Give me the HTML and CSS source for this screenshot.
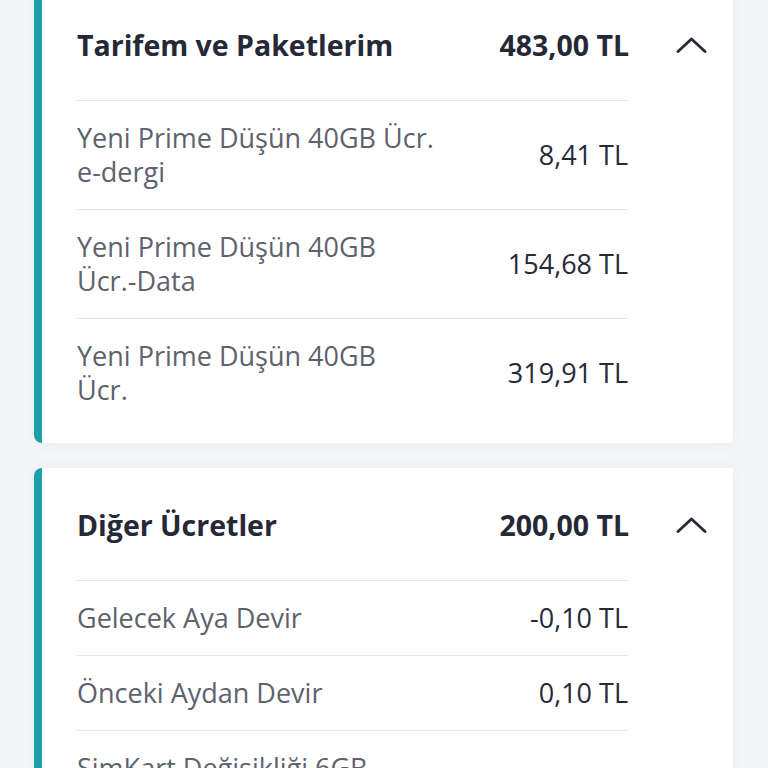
FILE: index.html
```html
<!DOCTYPE html>
<html lang="tr">
<head>
<meta charset="utf-8">
<link rel="stylesheet" href="styles.css">
</head>
<body>
<div class="list">
  <section class="card">
    <div class="card-head">
      <h2 class="title">Tarifem ve Paketlerim</h2>
      <span class="total">483,00 TL</span>
      <svg class="chev" width="31" height="16" viewBox="0 0 31 16"><path d="M2 14.5 L15.5 2 L29 14.5" fill="none" stroke="#262938" stroke-width="2.8" stroke-linecap="round" stroke-linejoin="round"/></svg>
    </div>
    <div class="card-body">
      <div class="row"><span class="label">Yeni Prime Düşün 40GB Ücr.<br>e-dergi</span><span class="amount">8,41 TL</span></div>
      <div class="row"><span class="label">Yeni Prime Düşün 40GB<br>Ücr.-Data</span><span class="amount">154,68 TL</span></div>
      <div class="row"><span class="label">Yeni Prime Düşün 40GB<br>Ücr.</span><span class="amount">319,91 TL</span></div>
    </div>
  </section>
  <section class="card">
    <div class="card-head">
      <h2 class="title">Diğer Ücretler</h2>
      <span class="total">200,00 TL</span>
      <svg class="chev" width="31" height="16" viewBox="0 0 31 16"><path d="M2 14.5 L15.5 2 L29 14.5" fill="none" stroke="#262938" stroke-width="2.8" stroke-linecap="round" stroke-linejoin="round"/></svg>
    </div>
    <div class="card-body">
      <div class="row"><span class="label">Gelecek Aya Devir</span><span class="amount">-0,10 TL</span></div>
      <div class="row"><span class="label">Önceki Aydan Devir</span><span class="amount">0,10 TL</span></div>
      <div class="row"><span class="label">SimKart Değişikliği 6GB</span><span class="amount"></span></div>
    </div>
  </section>
</div>
</body>
</html>
```
FILE: styles.css
```css
* { box-sizing: border-box; }
html, body { margin: 0; padding: 0; }
body {
  background: #f4f5f7;
  font-family: "Open Sans", Lato, sans-serif;
  width: 768px;
  height: 768px;
  overflow: hidden;
}
.list {
  margin-top: -12px;
  padding: 0 35px 0 34px;
  display: flex;
  flex-direction: column;
  gap: 25px;
}
.card {
  background: #fff;
  border-left: 8px solid #19a0a9;
  border-radius: 8px 2px 2px 8px;
  box-shadow: 0 0 14px rgba(30, 40, 60, 0.05);
}
.card-head {
  height: 112px;
  padding: 2px 26px 0 35px;
  display: flex;
  align-items: center;
}
.title {
  margin: 0;
  flex: 1;
  font-size: 28.5px;
  font-weight: 700;
  color: #252836;
}
.total {
  font-size: 28.5px;
  font-weight: 700;
  color: #252836;
}
.chev {
  margin-left: 47px;
  display: block;
}
.card-body {
  padding: 0 105px 16px 35px;
}
.row {
  border-top: 1px solid #e5e7ea;
  padding: 20px 0;
  display: flex;
  align-items: center;
  justify-content: space-between;
}
.label {
  font-size: 27px;
  line-height: 34px;
  color: #5d626d;
}
.amount {
  font-size: 27px;
  line-height: 34px;
  color: #262938;
  white-space: nowrap;
}
```
